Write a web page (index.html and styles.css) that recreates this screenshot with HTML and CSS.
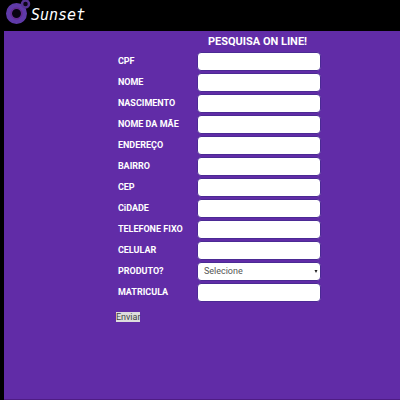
FILE: index.html
```html
<!DOCTYPE html>
<html lang="pt-BR">
<head>
<meta charset="utf-8">
<meta name="viewport" content="width=device-width, initial-scale=1">
<title>Sunset</title>
<link rel="stylesheet" href="styles.css">
</head>
<body>
<header class="topbar">
  <svg class="logo" width="31" height="28" viewBox="0 0 31 28" aria-hidden="true">
    <circle cx="16.5" cy="13.5" r="7.5" fill="#08040f" stroke="#5f3aa8" stroke-width="6"/>
    <circle cx="16.5" cy="13.5" r="5.5" fill="none" stroke="#6a2382" stroke-width="1"/>
    <circle cx="25.5" cy="4" r="3.5" fill="#0c0618" stroke="#573494" stroke-width="2.5"/>
  </svg>
  <span class="brand">Sunset</span>
</header>
<main class="panel">
  <form class="survey">
    <h1 class="title">PESQUISA ON LINE!</h1>
    <div class="fields">
      <label for="cpf">CPF</label><input class="control" id="cpf" type="text">
      <label for="nome">NOME</label><input class="control" id="nome" type="text">
      <label for="nascimento">NASCIMENTO</label><input class="control" id="nascimento" type="text">
      <label for="mae">NOME DA MÃE</label><input class="control" id="mae" type="text">
      <label for="endereco">ENDEREÇO</label><input class="control" id="endereco" type="text">
      <label for="bairro">BAIRRO</label><input class="control" id="bairro" type="text">
      <label for="cep">CEP</label><input class="control" id="cep" type="text">
      <label for="cidade">CiDADE</label><input class="control" id="cidade" type="text">
      <label for="telefone">TELEFONE FIXO</label><input class="control" id="telefone" type="text">
      <label for="celular">CELULAR</label><input class="control" id="celular" type="text">
      <label for="produto">PRODUTO?</label>
      <div class="select-wrap">
        <select class="control" id="produto"><option>Selecione</option></select>
        <svg class="arrow" width="4" height="3" viewBox="0 0 4 3" aria-hidden="true"><path d="M0.5 0h3L2 3z" fill="#222"/></svg>
      </div>
      <label for="matricula">MATRICULA</label><input class="control" id="matricula" type="text">
    </div>
    <button class="submit" type="submit">Enviar</button>
  </form>
</main>
</body>
</html>
```
FILE: styles.css
```css
* {
  box-sizing: border-box;
}

body {
  display: flex;
  flex-direction: column;
  min-height: 100vh;
  margin: 0;
  background: #000;
  color: #fff;
  font-family: Roboto, "Liberation Sans", sans-serif;
}

.topbar {
  display: flex;
  align-items: center;
  height: 31px;
  padding-bottom: 3px;
}

.brand {
  padding-top: 1px;
  font: italic 15px/20px "DejaVu Sans Mono", monospace;
}

.panel {
  flex: 1;
  margin-left: 4px;
  padding: 4px 0 16px;
  background: #612ca7;
  border-bottom: 1px solid #4f1c84;
}

.survey {
  width: 206px;
  margin: 0 auto 0 28%;
}

.title {
  margin: 0 0 4px;
  padding-left: 93px;
  font-size: 11px;
  font-weight: 700;
  line-height: 13px;
  white-space: nowrap;
}

.fields {
  display: grid;
  grid-template-columns: 79px 1fr;
  row-gap: 2px;
  align-items: center;
  padding-left: 3px;
}

.fields label {
  font-size: 9px;
  font-weight: 700;
  line-height: 19px;
  white-space: nowrap;
}

.control {
  display: block;
  width: 100%;
  height: 19px;
  margin: 0;
  padding: 0 6px;
  border: 1px solid #4b2a94;
  border-radius: 4px;
  background: #fff;
  color: #555;
  font: 9px/17px Roboto, "Liberation Sans", sans-serif;
  appearance: none;
}

.select-wrap {
  position: relative;
}

.arrow {
  position: absolute;
  top: 8px;
  right: 3px;
  pointer-events: none;
}

.submit {
  display: block;
  margin: 10px 0 0 1px;
  padding: 0;
  border: 0;
  background: #ddd;
  color: #444;
  font: 9px/10px Roboto, "Liberation Sans", sans-serif;
}
```
